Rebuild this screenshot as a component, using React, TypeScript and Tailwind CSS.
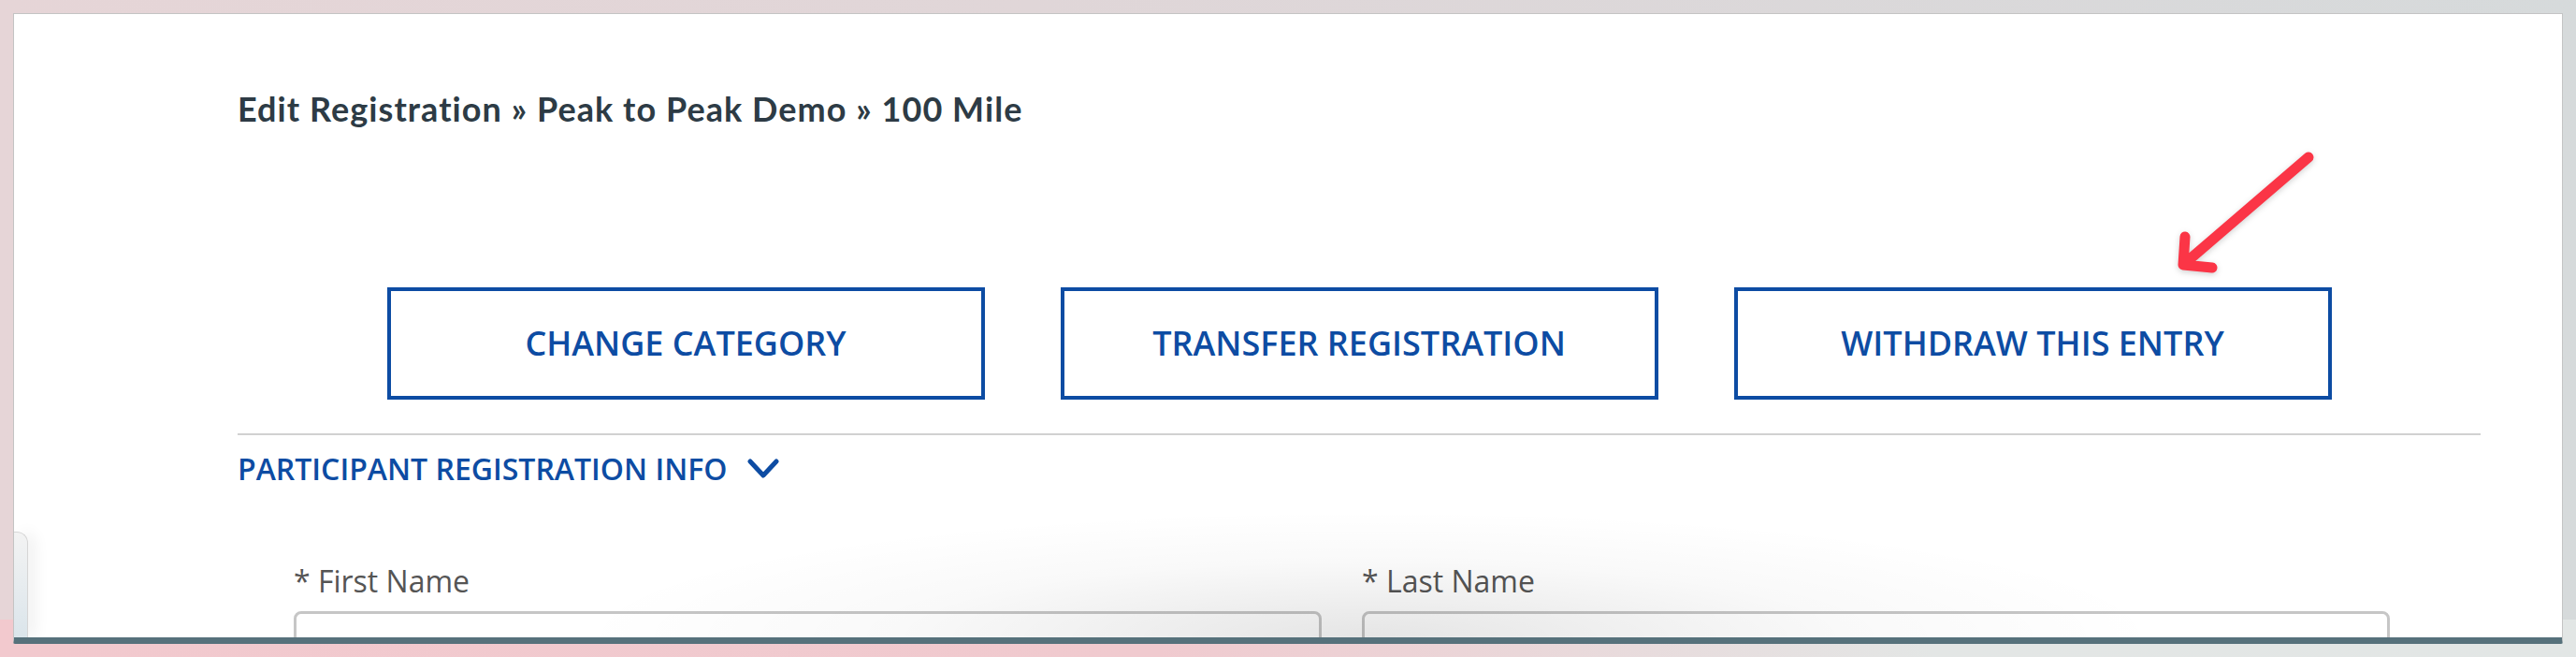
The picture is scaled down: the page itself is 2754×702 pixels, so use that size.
const BUTTONS = ["CHANGE CATEGORY", "TRANSFER REGISTRATION", "WITHDRAW THIS ENTRY"];

const FIELDS = ["* First Name", "* Last Name"];

function Arrow() {
  // red annotation arrow pointing at the withdraw button
  return (
    <svg
      className="absolute left-[2300px] top-[140px] drop-shadow-[0_2px_3px_rgba(0,0,0,0.18)]"
      width="200"
      height="170"
      viewBox="0 0 200 170"
      fill="none"
    >
      <path
        d="M168 28 L34 143 M36 113 L34 143 L65 146"
        stroke="#fb3546"
        strokeWidth="11"
        strokeLinecap="round"
        strokeLinejoin="round"
      />
    </svg>
  );
}

export default function App() {
  return (
    <div className="relative w-[2754px] h-[702px] overflow-hidden bg-[linear-gradient(to_right,#e6d5d7_0%,#e0d6d8_40%,#d6dadb_100%)]">
      <div className="absolute inset-x-0 bottom-0 h-[40px] bg-[linear-gradient(to_right,#f2c9ce_0%,#f0cacf_45%,#e3e6e5_75%,#e2e6e5_100%)]" />

      <div className="relative ml-[14px] mt-[14px] w-[2726px] h-[674px] bg-white border border-[#c4c4c4] border-b-[7px] border-b-[#56717b] rounded-b-[2px] overflow-hidden font-['Open_Sans',sans-serif]">
        <div className="ml-[239px] w-[2398px] pt-[79px]">
          <h2 className="font-['Lato',sans-serif] font-bold text-[36px] leading-[44px] text-[#2d3b45] tracking-[1.05px]">
            Edit Registration » Peak to Peak Demo » 100 Mile
          </h2>

          <div className="mt-[169px] flex justify-center gap-[81px]">
            {BUTTONS.map((label) => (
              <button
                key={label}
                className="w-[639px] h-[120px] border-4 border-[#0d4ca3] bg-white flex items-center justify-center text-[36px] font-semibold text-[#0d4ca3]"
              >
                {label}
              </button>
            ))}
          </div>

          <div className="mt-[36px] border-t-2 border-[#d1d1d1]" />

          <div className="mt-[16px] flex items-center gap-[21px] text-[32px] leading-[40px] font-semibold text-[#0d4ca3]">
            <span>PARTICIPANT REGISTRATION INFO</span>
            <svg width="36" height="24" viewBox="0 0 36 24" fill="none">
              <polyline
                points="4,4 18,19 32,4"
                stroke="#0d4ca3"
                strokeWidth="5"
                strokeLinecap="round"
                strokeLinejoin="round"
              />
            </svg>
          </div>

          <div className="ml-[60px] mt-[80px] w-[2241px] grid grid-cols-2 gap-x-[43px]">
            {FIELDS.map((f) => (
              <div key={f} className="flex flex-col gap-[12px]">
                <label className="text-[32px] leading-[40px] text-[#555555]">{f}</label>
                <div className="h-[80px] border-[3px] border-[#c6c6c6] rounded-[8px] bg-white" />
              </div>
            ))}
          </div>
        </div>

        {/* side tab peeking in at the lower left */}
        <div className="absolute left-0 top-[553px] bottom-0 w-[15px] rounded-tr-[12px] border-t border-r border-[#d6d6d6] bg-[linear-gradient(to_bottom,#f3f3f3,#dbe5eb)] shadow-[8px_0_16px_rgba(0,0,0,0.06)]" />

        {/* soft shadow of a floating sheet near the bottom */}
        <div className="pointer-events-none absolute left-[600px] w-[1700px] top-[530px] bottom-0 bg-[radial-gradient(ellipse_50%_100%_at_50%_100%,rgba(0,0,0,0.1),rgba(0,0,0,0.025)_60%,transparent_100%)]" />
      </div>

      <Arrow />
    </div>
  );
}
